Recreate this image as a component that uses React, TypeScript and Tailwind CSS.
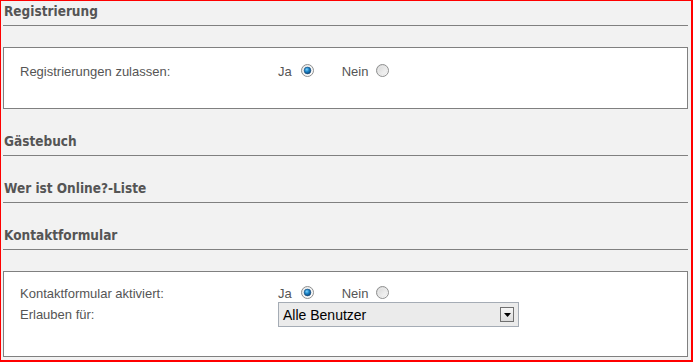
import React from "react";

const headFont = { fontFamily: '"DejaVu Sans Condensed", "DejaVu Sans", sans-serif', fontStretch: "condensed" as const };
const bodyFont = { fontFamily: '"Liberation Sans", Arial, sans-serif' };

function Radio({ checked }: { checked: boolean }) {
  return (
    <svg width="13" height="13" viewBox="0 0 13 13" className="block">
      <defs>
        <linearGradient id={checked ? "rgOn" : "rgOff"} x1="0" y1="0" x2="1" y2="1">
          <stop offset="0" stopColor={checked ? "#e8e8e8" : "#d2d2d2"} />
          <stop offset="1" stopColor="#ffffff" />
        </linearGradient>
        <radialGradient id="dot" cx="0.4" cy="0.35" r="0.7">
          <stop offset="0" stopColor="#7fd3ff" />
          <stop offset="0.45" stopColor="#1c86c8" />
          <stop offset="1" stopColor="#0a3f73" />
        </radialGradient>
      </defs>
      <circle cx="6.5" cy="6.5" r="6" fill={`url(#${checked ? "rgOn" : "rgOff"})`} stroke="#8e8f8f" strokeWidth="1" />
      {checked ? (
        <circle cx="6.5" cy="6.5" r="3.4" fill="url(#dot)" stroke="#1b4c7a" strokeWidth="0.6" />
      ) : (
        <circle cx="6.5" cy="6.5" r="4.2" fill="none" stroke="#e9e9e9" strokeWidth="1" />
      )}
    </svg>
  );
}

function YesNo() {
  return (
    <div className="flex items-center text-[13px] text-[#555]" style={bodyFont}>
      <span>Ja</span>
      <span className="ml-[9px] -mt-[3px]">
        <Radio checked />
      </span>
      <span className="ml-[28px]">Nein</span>
      <span className="ml-[8px] -mt-[3px]">
        <Radio checked={false} />
      </span>
    </div>
  );
}

function Heading({ children, first }: { children: React.ReactNode; first?: boolean }) {
  return (
    <div
      className={`${first ? "pt-px" : "pt-[23px]"} pb-[5px] border-b border-[#808080] pl-px text-[13.5px] font-bold leading-[18px] text-[#555]`}
      style={headFont}
    >
      {children}
    </div>
  );
}

export default function App() {
  return (
    <div className="w-[693px] h-[362px] bg-[#f2f2f2] border-l border-t border-r-2 border-b-2 border-[#ff0000] pl-[2px] pr-[3px] overflow-hidden">
      <Heading first>Registrierung</Heading>

      <div className="mt-[21px] bg-white border border-[#808080] pl-[16px] pt-[16px] pb-[28px]">
        <div className="flex h-[16px] items-center text-[13px] leading-[16px] text-[#555]" style={bodyFont}>
          <div className="w-[258px]">Registrierungen zulassen:</div>
          <YesNo />
        </div>
      </div>

      <Heading>Gästebuch</Heading>
      <Heading>Wer ist Online?-Liste</Heading>
      <Heading>Kontaktformular</Heading>

      <div className="mt-[21px] bg-white border border-[#808080] pl-[16px] pt-[14px] pb-[29px]">
        <div className="flex h-[16px] items-center text-[13px] leading-[16px] text-[#555]" style={bodyFont}>
          <div className="w-[258px]">Kontaktformular aktiviert:</div>
          <YesNo />
        </div>
        <div className="flex h-[25px] items-center text-[13px] leading-[16px] text-[#555]" style={bodyFont}>
          <div className="w-[258px]">Erlauben für:</div>
          <div className="w-[241px] h-[25px] border border-[#a5acb5] bg-[#ebebeb] flex items-center justify-between pl-[4px] pr-[4px]">
            <span className="text-[14px] text-black" style={bodyFont}>Alle Benutzer</span>
            <div className="w-[14px] h-[15px] border border-[#707070] bg-gradient-to-b from-[#f6f6f6] to-[#dcdcdc] flex items-center justify-center">
              <svg width="7" height="4" viewBox="0 0 7 4">
                <path d="M0 0H7L3.5 4Z" fill="#000" />
              </svg>
            </div>
          </div>
        </div>
      </div>
    </div>
  );
}
